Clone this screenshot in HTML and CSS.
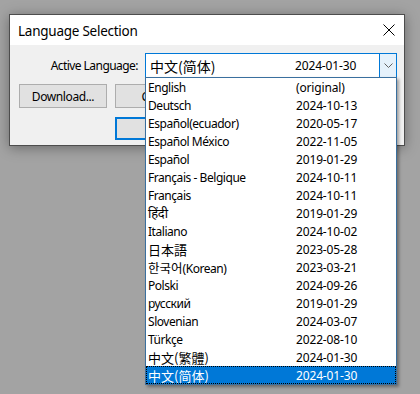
FILE: index.html
```html
<!DOCTYPE html>
<html>
<head>
<meta charset="utf-8">
<link rel="stylesheet" href="styles.css">
</head>
<body>
<div class="dialog">
  <div class="titlebar">
    <span class="title">Language Selection</span>
    <svg class="close" width="12" height="12" viewBox="0 0 12 12"><path d="M0.5 0.5 L11.5 11.5 M11.5 0.5 L0.5 11.5" stroke="#000" stroke-width="1" fill="none"/></svg>
  </div>
  <div class="content">
    <div class="row">
      <span class="label">Active Language:</span>
      <div class="combo">
        <div class="combo-value">
          <span class="cname cjk">中文(简体)</span>
          <span class="cdate">2024-01-30</span>
        </div>
        <div class="combo-btn">
          <svg width="9" height="5" viewBox="0 0 9 5"><path d="M0.5 0.5 L4.5 4.5 L8.5 0.5" stroke="#606060" stroke-width="1" fill="none"/></svg>
        </div>
        <div class="list">
          <div class="item"><span class="n">English</span><span class="d">(original)</span></div>
          <div class="item"><span class="n">Deutsch</span><span class="d">2024-10-13</span></div>
          <div class="item"><span class="n">Español(ecuador)</span><span class="d">2020-05-17</span></div>
          <div class="item"><span class="n">Español México</span><span class="d">2022-11-05</span></div>
          <div class="item"><span class="n">Español</span><span class="d">2019-01-29</span></div>
          <div class="item"><span class="n">Français - Belgique</span><span class="d">2024-10-11</span></div>
          <div class="item"><span class="n">Français</span><span class="d">2024-10-11</span></div>
          <div class="item"><span class="n hindi">हिंदी</span><span class="d">2019-01-29</span></div>
          <div class="item"><span class="n">Italiano</span><span class="d">2024-10-02</span></div>
          <div class="item"><span class="n cjk jp">日本語</span><span class="d">2023-05-28</span></div>
          <div class="item"><span class="n"><span class="kr">한국어</span>(Korean)</span><span class="d">2023-03-21</span></div>
          <div class="item"><span class="n">Polski</span><span class="d">2024-09-26</span></div>
          <div class="item"><span class="n">русский</span><span class="d">2019-01-29</span></div>
          <div class="item"><span class="n">Slovenian</span><span class="d">2024-03-07</span></div>
          <div class="item"><span class="n">Türkçe</span><span class="d">2022-08-10</span></div>
          <div class="item"><span class="n cjk tc">中文(繁體)</span><span class="d">2024-01-30</span></div>
          <div class="item selected"><span class="n cjk">中文(简体)</span><span class="d">2024-01-30</span></div>
        </div>
      </div>
    </div>
    <div class="row buttons">
      <button class="btn">Download...</button>
      <button class="btn">Cancel</button>
    </div>
    <div class="row buttons second">
      <button class="btn default"></button>
    </div>
  </div>
</div>
</body>
</html>
```

FILE: styles.css
```css
html, body {
  margin: 0;
  padding: 0;
}
body {
  background: #a3a3a3;
  width: 420px;
  height: 394px;
  overflow: hidden;
  font-family: "Noto Sans", "Open Sans", sans-serif;
  font-size: 12px;
  color: #000;
}
.dialog {
  margin: 14px 0 0 9px;
  width: 394px;
  height: 130px;
  border: 1px solid #4d4d4d;
  background: #f0f0f0;
  box-shadow: 0 2px 12px rgba(0, 0, 0, 0.35);
}
.titlebar {
  height: 30px;
  background: #fff;
  display: flex;
  align-items: center;
  justify-content: space-between;
  padding: 0 9px 0 8px;
}
.title {
  font-size: 13.5px;
  letter-spacing: -0.25px;
  padding-top: 1px;
}
.close {
  display: block;
}
.content {
  padding: 8px 0 0 9px;
}
.row {
  display: flex;
  align-items: center;
}
.label {
  width: 119px;
  text-align: right;
  margin-right: 7px;
  letter-spacing: -0.55px;
}
.combo {
  position: relative;
  width: 252px;
  height: 25px;
  box-sizing: border-box;
  border: 1px solid #0078d7;
  background: #fff;
  display: flex;
}
.combo-value {
  flex: 1;
  display: flex;
  align-items: center;
  padding-left: 4px;
}
.cname {
  width: 145px;
}
.cname.cjk {
  font-family: "Noto Sans CJK SC", sans-serif;
  font-size: 14px;
}
.cdate {
  font-size: 12px;
  letter-spacing: -0.15px;
}
.combo-btn {
  width: 16px;
  border-left: 1px solid #0078d7;
  background: #e5f1fb;
  display: flex;
  align-items: center;
  justify-content: center;
}
.list {
  position: absolute;
  left: -1px;
  top: 23px;
  width: 252px;
  box-sizing: border-box;
  border: 1px solid #3a6f9e;
  background: #fff;
  box-shadow: 2px 2px 3px rgba(0, 0, 0, 0.35);
  z-index: 2;
}
.item {
  height: 18px;
  display: flex;
  align-items: center;
  padding-left: 2px;
  box-sizing: border-box;
}
.item .n {
  width: 148px;
  white-space: nowrap;
  letter-spacing: -0.45px;
}
.item .d {
  letter-spacing: -0.15px;
}
.item .cjk {
  font-family: "Noto Sans CJK SC", sans-serif;
  font-size: 13px;
  letter-spacing: 0;
}
.item .tc {
  font-family: "Noto Sans CJK TC", sans-serif;
}
.item .jp {
  font-family: "Noto Sans CJK JP", sans-serif;
}
.kr {
  font-family: "Noto Sans CJK KR", sans-serif;
  font-size: 12.5px;
  letter-spacing: 0;
}
.hindi {
  font-size: 13px;
}
.item.selected {
  background: #0078d7;
  color: #fff;
  outline: 1px dotted #000;
  outline-offset: -1px;
}
.buttons {
  margin-top: 6px;
  gap: 8px;
}
.buttons.second {
  margin-top: 9px;
  padding-left: 96px;
}
.btn {
  width: 88px;
  height: 24px;
  box-sizing: border-box;
  border: 1px solid #adadad;
  background: #e1e1e1;
  font-family: "Noto Sans", "Open Sans", sans-serif;
  font-size: 12px;
  letter-spacing: -0.4px;
  color: #000;
  padding: 0;
  margin: 0;
}
.btn.default {
  height: 23px;
  border: 2px solid #0078d7;
}
```
